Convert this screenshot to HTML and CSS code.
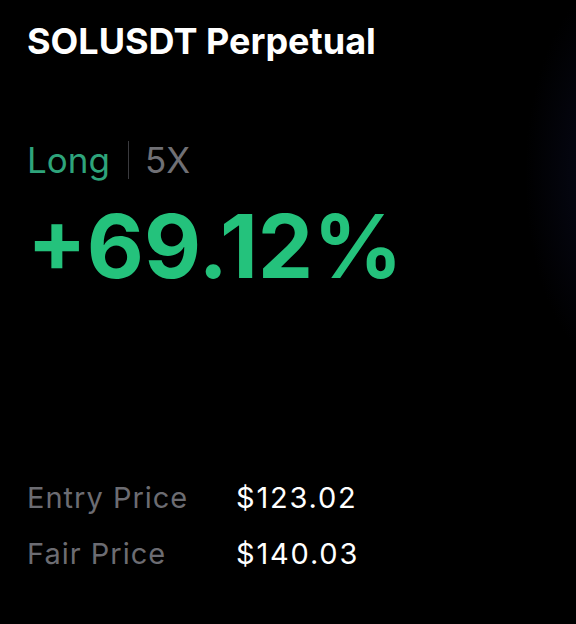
FILE: index.html
```html
<!DOCTYPE html>
<html lang="en">
<head>
    <meta charset="UTF-8">
    <title>SOLUSDT Perpetual</title>
    <link rel="stylesheet" href="styles.css">
</head>
<body>
    <div class="card">
        <h1 class="symbol">SOLUSDT Perpetual</h1>

        <div class="side-row">
            <span class="side">Long</span>
            <span class="divider"></span>
            <span class="leverage">5X</span>
        </div>

        <div class="pnl">+69.12%</div>

        <div class="prices">
            <div class="price-row">
                <span class="label">Entry Price</span>
                <span class="value">$123.02</span>
            </div>
            <div class="price-row">
                <span class="label">Fair Price</span>
                <span class="value">$140.03</span>
            </div>
        </div>
    </div>
</body>
</html>
```

FILE: styles.css
```css
* {
    margin: 0;
    padding: 0;
    box-sizing: border-box;
}

body {
    font-family: 'Inter', 'Roboto', sans-serif;
    background: #000;
    width: 576px;
    height: 624px;
    overflow: hidden;
}

.card {
    height: 100%;
    padding: 19px 0 0 27px;
    background: radial-gradient(ellipse 100px 200px at 625px 175px, #080b1c 0%, #04050e 55%, #000 100%);
}

.symbol {
    color: #fff;
    font-size: 36px;
    font-weight: 700;
    line-height: 44px;
}

.side-row {
    display: flex;
    align-items: center;
    margin-top: 75px;
    font-size: 35px;
    line-height: 44px;
}

.side {
    color: #2ea47b;
}

.divider {
    width: 1px;
    height: 38px;
    background: #3a3a3e;
    margin: 0 16px 0 18px;
}

.leverage {
    color: #707075;
}

.pnl {
    color: #24c27c;
    font-size: 88px;
    font-weight: 700;
    line-height: 100px;
    margin-top: 14px;
}

.prices {
    margin-top: 174px;
}

.price-row {
    display: flex;
    font-size: 29px;
    line-height: 56px;
}

.label {
    width: 209px;
    color: #6c6c72;
    letter-spacing: 1px;
}

.value {
    color: #fff;
    letter-spacing: 1.8px;
}
```
